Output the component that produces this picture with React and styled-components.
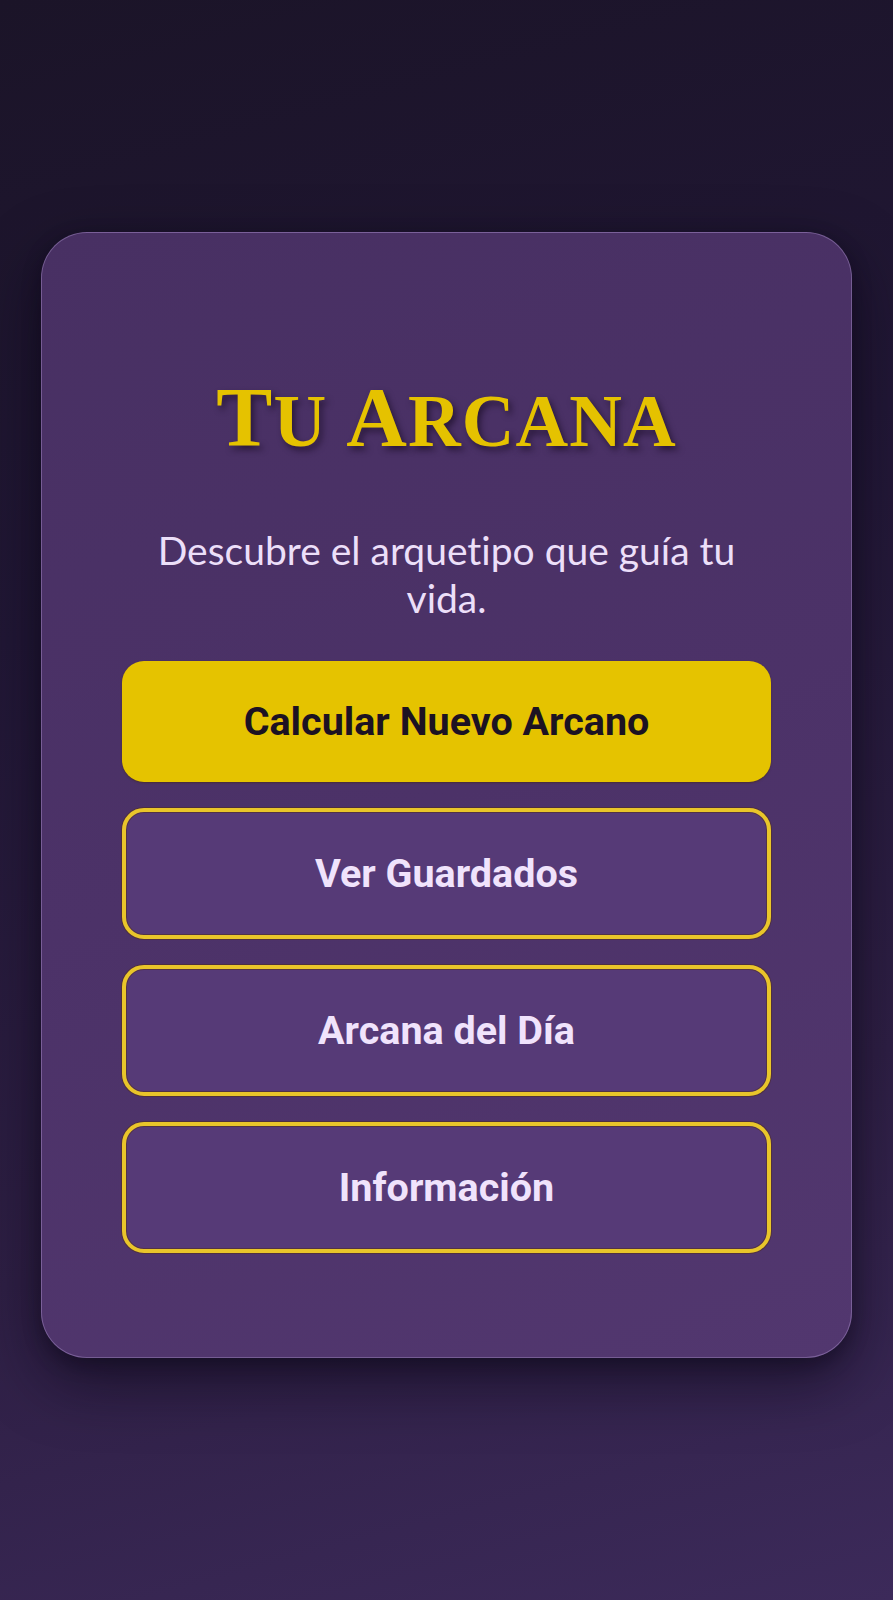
import React from "react";
import styled, { createGlobalStyle } from "styled-components";

const GlobalStyle = createGlobalStyle`
  html, body {
    margin: 0;
    padding: 0;
  }
  body {
    background: linear-gradient(165deg, #1b1428 0%, #211735 35%, #2e1f44 70%, #3c2a5a 100%);
    min-height: 100vh;
  }
  * { box-sizing: border-box; }
`;

const Page = styled.main`
  min-height: 1600px;
  padding: 232px 41px 0;
  display: flex;
  flex-direction: column;
  align-items: stretch;
`;

const Card = styled.section`
  border: 1px solid rgba(200, 175, 235, 0.35);
  border-radius: 46px;
  background: linear-gradient(160deg, #483063 0%, #4c3268 50%, #52376f 100%);
  box-shadow: 0 24px 60px rgba(10, 5, 20, 0.55), 0 6px 18px rgba(10, 5, 20, 0.35);
  padding: 133px 80px 104px;
  display: flex;
  flex-direction: column;
  align-items: stretch;
  text-align: center;
`;

const Title = styled.h1`
  margin: 0 0 53px;
  font-family: "Liberation Serif", "DejaVu Serif", serif;
  font-weight: 700;
  font-size: 73px;
  line-height: 103px;
  color: #e5c200;
  text-transform: uppercase;
  letter-spacing: 1px;
  text-shadow: 3px 4px 6px rgba(20, 8, 30, 0.6);
`;

const Initial = styled.span`
  font-size: 84px;
`;

const Subtitle = styled.p`
  margin: 0 0 39px;
  font-family: Lato, "Open Sans", sans-serif;
  font-size: 39px;
  line-height: 48px;
  color: #ecdff9;
  font-variant-ligatures: none;
`;

const Actions = styled.nav`
  display: flex;
  flex-direction: column;
  gap: 26px;
`;

const Button = styled.button`
  display: block;
  width: 100%;
  font-family: Roboto, "Liberation Sans", sans-serif;
  font-weight: 700;
  font-size: 39.5px;
  line-height: 41px;
  border-radius: 22px;
  cursor: pointer;
  ${({ $primary }) =>
    $primary
      ? `
    padding: 40px 20px;
    border: none;
    background: #e5c300;
    color: #1c1222;
    box-shadow: 0 1px 2px rgba(70, 40, 20, 0.6);
  `
      : `
    padding: 41px 20px;
    border: 4px solid #e9c52a;
    background: #563a77;
    color: #f0e3fc;
    box-shadow: 0 0 0 1px rgba(80, 45, 30, 0.55), inset 0 0 0 1px rgba(80, 45, 30, 0.55);
  `}
`;

export default function App() {
  return (
    <>
      <GlobalStyle />
      <Page>
        <Card>
          <Title>
            <Initial>T</Initial>u <Initial>A</Initial>rcana
          </Title>
          <Subtitle>Descubre el arquetipo que guía tu vida.</Subtitle>
          <Actions>
            <Button $primary>Calcular Nuevo Arcano</Button>
            <Button>Ver Guardados</Button>
            <Button>Arcana del Día</Button>
            <Button>Información</Button>
          </Actions>
        </Card>
      </Page>
    </>
  );
}
